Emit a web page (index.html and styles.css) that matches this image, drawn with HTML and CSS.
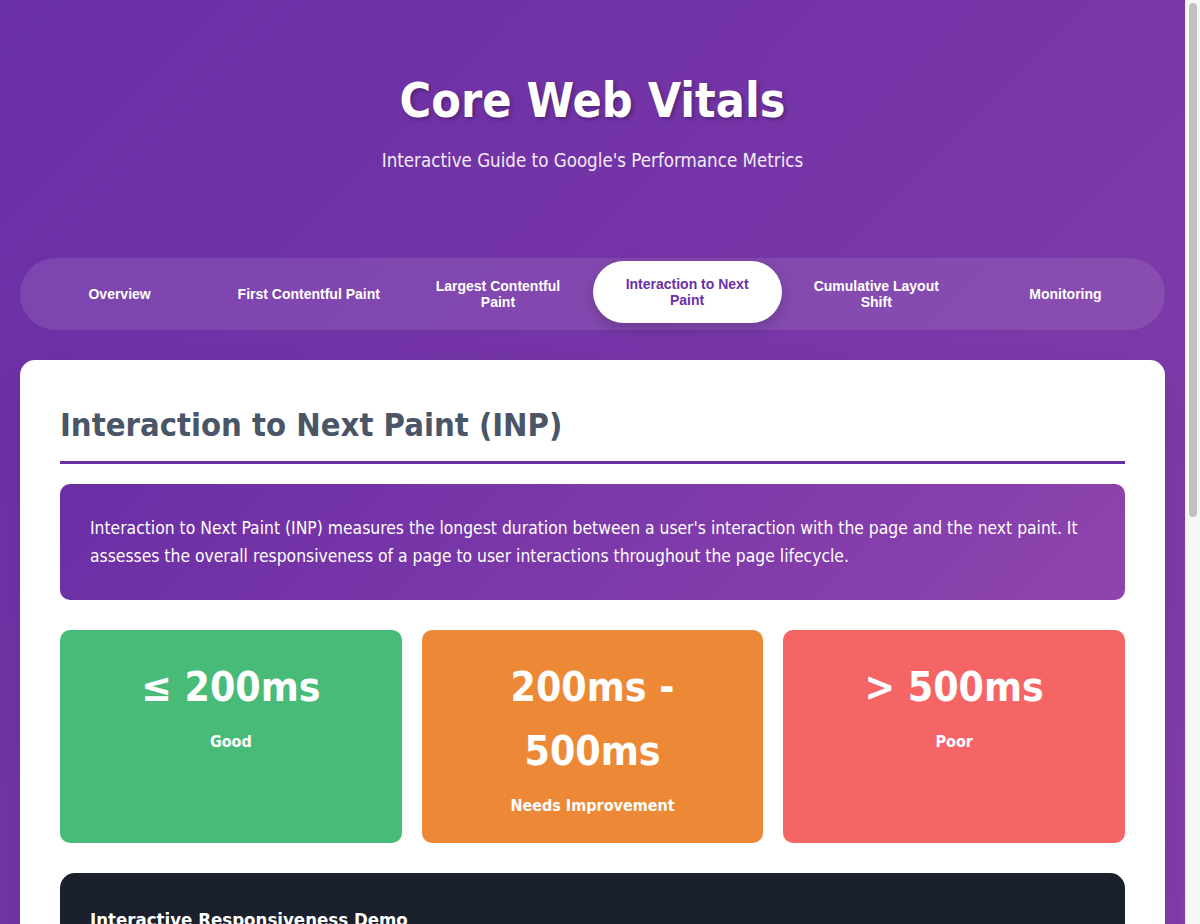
FILE: index.html
```html
<!DOCTYPE html>
<html lang="en">
<head>
<meta charset="utf-8">
<title>Core Web Vitals</title>
<link rel="stylesheet" href="styles.css">
</head>
<body>
<div class="container">
  <header class="header">
    <h1 class="title">Core Web Vitals</h1>
    <p class="subtitle">Interactive Guide to Google's Performance Metrics</p>
  </header>

  <nav class="tabs">
    <button class="tab">Overview</button>
    <button class="tab">First Contentful Paint</button>
    <button class="tab">Largest Contentful Paint</button>
    <button class="tab active">Interaction to Next Paint</button>
    <button class="tab">Cumulative Layout Shift</button>
    <button class="tab">Monitoring</button>
  </nav>

  <main class="card">
    <h2 class="section-title">Interaction to Next Paint (INP)</h2>
    <div class="definition">
      Interaction to Next Paint (INP) measures the longest duration between a user's interaction with the page and the next paint. It assesses the overall responsiveness of a page to user interactions throughout the page lifecycle.
    </div>

    <div class="thresholds">
      <div class="threshold good">
        <div class="value">≤ 200ms</div>
        <div class="label">Good</div>
      </div>
      <div class="threshold needs">
        <div class="value">200ms - 500ms</div>
        <div class="label">Needs Improvement</div>
      </div>
      <div class="threshold poor">
        <div class="value">&gt; 500ms</div>
        <div class="label">Poor</div>
      </div>
    </div>

    <div class="demo">
      <h3 class="demo-title">Interactive Responsiveness Demo</h3>
      <p class="demo-text">Click the buttons below to simulate interactions with different processing times and see how they affect INP.</p>
      <div class="demo-buttons">
        <button class="demo-btn fast">Fast Interaction (50ms)</button>
        <button class="demo-btn medium">Medium Interaction (300ms)</button>
        <button class="demo-btn slow">Slow Interaction (800ms)</button>
      </div>
      <div class="demo-log">Interaction log will appear here...</div>
    </div>

    <div class="tips">
      <h3 class="tips-title">How to Improve INP</h3>
      <ul class="tips-list">
        <li>Break up long tasks into smaller chunks</li>
        <li>Avoid large, complex layouts and layout thrashing</li>
        <li>Minimize main-thread work during interactions</li>
        <li>Use web workers for heavy computations</li>
        <li>Yield to the main thread frequently</li>
      </ul>
    </div>

    <pre class="code">new PerformanceObserver((list) =&gt; {
  for (const entry of list.getEntries()) {
    console.log('Interaction:', entry.name, entry.duration);
  }
}).observe({ type: 'event', buffered: true, durationThreshold: 16 });</pre>
  </main>
</div>
<div class="scrollbar" aria-hidden="true"><div class="scrollbar-thumb"></div></div>
</body>
</html>
```

FILE: styles.css
```css
* {
  box-sizing: border-box;
  margin: 0;
  padding: 0;
}

html {
  scrollbar-width: none;
}

body {
  font-family: "DejaVu Sans Condensed", "DejaVu Sans", sans-serif;
  line-height: 1.6;
  color: #2d3748;
  background: linear-gradient(135deg, #6a2ea5 0%, #8e44ad 100%);
  min-height: 100vh;
  margin-right: 15px;
}

.container {
  max-width: 1200px;
  margin: 0 auto;
  padding: 20px;
}

.header {
  text-align: center;
  color: #fff;
  padding: 42px 0 83px;
}

.title {
  font-size: 48px;
  font-weight: 700;
  line-height: 1.6;
  text-shadow: 2px 2px 4px rgba(0, 0, 0, 0.3);
  margin-bottom: 8px;
}

.subtitle {
  font-size: 18.6px;
  line-height: 28px;
  opacity: 0.9;
}

.tabs {
  display: flex;
  background: rgba(255, 255, 255, 0.1);
  border-radius: 36px;
  padding: 5px;
  margin-bottom: 30px;
}

.tab {
  flex: 1;
  border: none;
  background: transparent;
  color: #fff;
  font-family: "Liberation Sans", Arial, sans-serif;
  font-size: 14px;
  font-weight: 700;
  line-height: 16px;
  padding: 15px 20px;
  border-radius: 31px;
  cursor: pointer;
}

.tab.active {
  background: #fff;
  color: #6b2fa5;
  transform: translateY(-2px);
  box-shadow: 0 5px 15px rgba(0, 0, 0, 0.2);
}

.card {
  background: #fff;
  border-radius: 15px;
  padding: 40px;
  box-shadow: 0 20px 40px rgba(0, 0, 0, 0.1);
}

.section-title {
  font-size: 32.5px;
  font-weight: 700;
  color: #4a5568;
  line-height: 51px;
  padding-bottom: 10px;
  border-bottom: 3px solid #6b2fa5;
  margin-bottom: 20px;
}

.definition {
  background: linear-gradient(135deg, #6a2ea5 0%, #8e44ad 100%);
  color: #fff;
  font-size: 17.35px;
  line-height: 28px;
  padding: 30px;
  border-radius: 10px;
  margin-bottom: 30px;
}

.thresholds {
  display: grid;
  grid-template-columns: repeat(3, 1fr);
  gap: 20px;
  margin-bottom: 30px;
}

.threshold {
  color: #fff;
  text-align: center;
  padding: 25px;
  border-radius: 10px;
}

.threshold.good { background: #48bb78; }
.threshold.needs { background: #ed8936; }
.threshold.poor { background: #f56565; }

.value {
  font-size: 40.6px;
  font-weight: 700;
  line-height: 64px;
}

.label {
  font-size: 16px;
  font-weight: 700;
  margin-top: 10px;
}

.demo {
  background: #1a202c;
  color: #fff;
  border-radius: 15px;
  padding: 32px 30px 30px;
  margin-bottom: 30px;
}

.demo-title {
  font-size: 18.5px;
  font-weight: 700;
  margin-bottom: 15px;
}

.demo-text {
  color: #cbd5e0;
  margin-bottom: 20px;
}

.demo-buttons {
  display: flex;
  gap: 15px;
  margin-bottom: 20px;
}

.demo-btn {
  border: none;
  color: #fff;
  font-family: inherit;
  font-size: 15px;
  font-weight: 700;
  padding: 12px 22px;
  border-radius: 8px;
}

.demo-btn.fast { background: #48bb78; }
.demo-btn.medium { background: #ed8936; }
.demo-btn.slow { background: #f56565; }

.demo-log {
  background: #2d3748;
  border-radius: 8px;
  padding: 20px;
  min-height: 150px;
  font-family: "DejaVu Sans Mono", monospace;
  font-size: 14px;
  color: #a0aec0;
}

.tips {
  background: #f7fafc;
  border-left: 4px solid #6b2fa5;
  border-radius: 10px;
  padding: 25px 30px;
  margin-bottom: 30px;
}

.tips-title {
  font-size: 20px;
  color: #4a5568;
  margin-bottom: 10px;
}

.tips-list {
  padding-left: 22px;
  color: #4a5568;
}

.code {
  background: #2d3748;
  color: #e2e8f0;
  border-radius: 8px;
  padding: 20px;
  font-family: "DejaVu Sans Mono", monospace;
  font-size: 13px;
  line-height: 1.6;
}

.scrollbar {
  position: fixed;
  top: 0;
  right: 0;
  width: 15px;
  height: 100%;
  background: #f8f8f8;
  border-left: 1px solid #ececec;
}

.scrollbar-thumb {
  position: absolute;
  top: 3px;
  left: 3px;
  width: 8px;
  height: 514px;
  border-radius: 4px;
  background: #c1c1c1;
}
```
